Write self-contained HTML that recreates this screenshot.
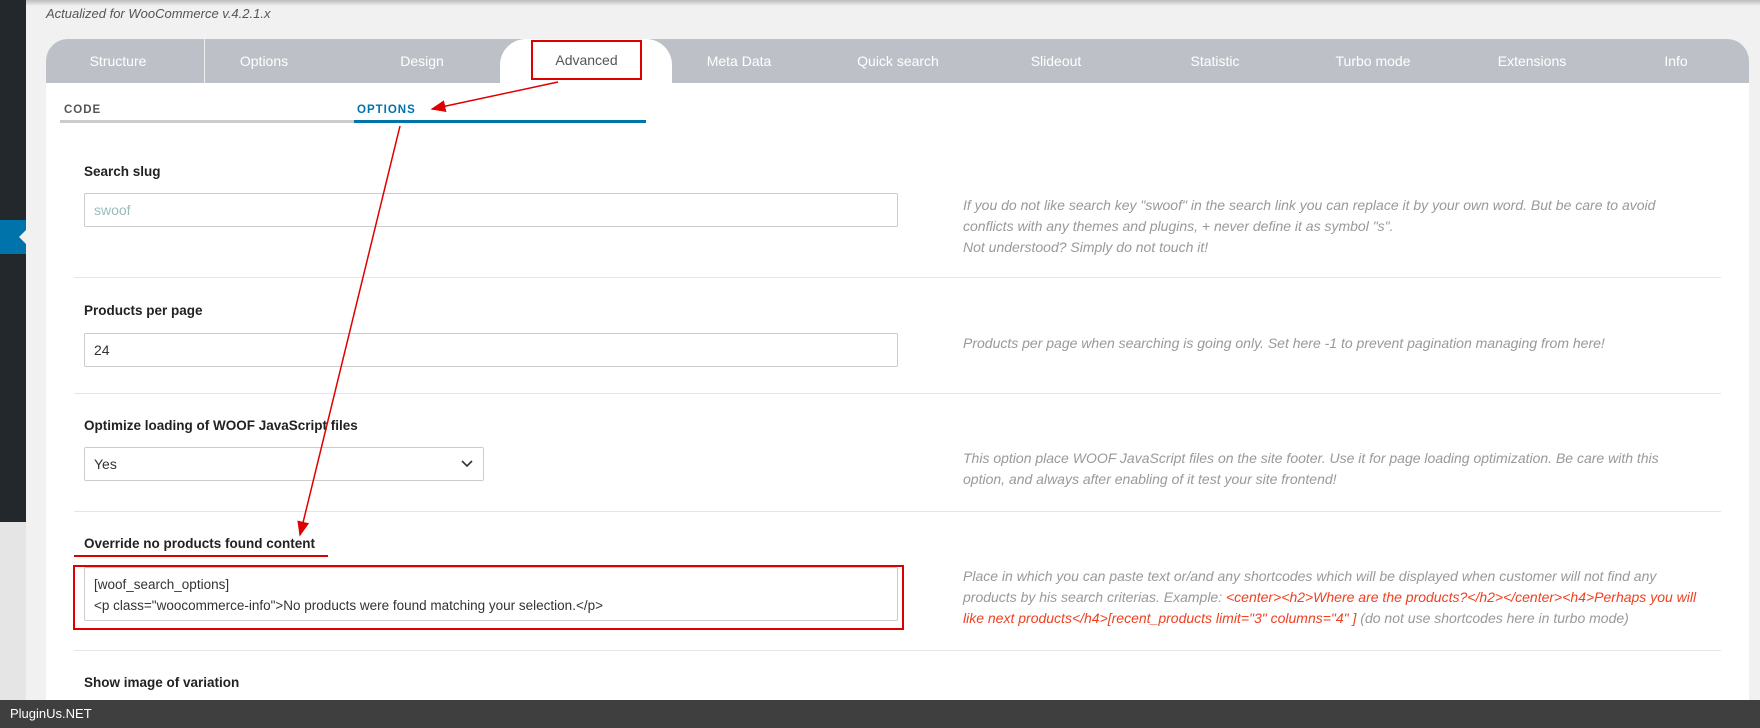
<!DOCTYPE html>
<html><head><meta charset="utf-8"><style>
*{box-sizing:border-box;margin:0;padding:0}
body{width:1760px;height:728px;overflow:hidden;background:#f1f1f1;font-family:"Liberation Sans",Arial,sans-serif;position:relative}
.side{position:absolute;left:0;top:0;width:26px;height:522px;background:#23282d}
.side2{position:absolute;left:0;top:0;width:26px;height:700px;background:#e5e5e5}
.mark{position:absolute;left:0;top:220px;width:26px;height:34px;background:#0073aa}
.mark:after{content:"";position:absolute;right:0;top:10px;border:7px solid transparent;border-right-color:#f1f1f1}
.topsh{position:absolute;left:26px;top:0;right:0;height:6px;background:linear-gradient(#bbb,#f1f1f1)}
.act{position:absolute;left:46px;top:6px;font-size:13px;font-style:italic;color:#555}
.panel{position:absolute;left:46px;top:83px;width:1703px;height:617px;background:#fff}
.tabs{position:absolute;left:46px;top:39px;width:1703px;height:44px;background:#bdc1c7;border-radius:22px 22px 0 0}
.tab{position:absolute;top:0;height:44px;line-height:44px;text-align:center;color:#fff;font-size:14px;width:150px;margin-left:-75px}
.adv{position:absolute;left:500px;top:39px;width:172px;height:45px;background:#fff;border-radius:26px 26px 0 0}
.advbox{position:absolute;left:531px;top:40px;width:111px;height:40px;border:2px solid #d00;color:#555;font-size:14px;text-align:center;line-height:36px}
.sub{position:absolute;top:104px;font-size:11.5px;font-weight:bold;letter-spacing:1px}
.lbl{position:absolute;left:84px;font-size:13.5px;font-weight:bold;color:#222}
.inp{position:absolute;left:84px;width:814px;height:34px;border:1px solid #ccc;border-radius:2px;font-size:14px;padding:8px 9px;color:#333}
.help{position:absolute;left:963px;width:736px;font-size:14px;font-style:italic;color:#999;line-height:21px}
.sep{position:absolute;left:74px;width:1647px;height:1px;background:#e2e6e6}
.red{color:#f04020}
.foot{position:absolute;left:0;top:700px;width:1760px;height:28px;background:#3f3f3f;color:#fff;font-size:13px;line-height:28px;padding-left:10px}
</style></head><body>
<div class="side2"></div><div class="side"></div><div class="mark"></div>
<div class="topsh"></div>
<div class="act">Actualized for WooCommerce v.4.2.1.x</div>
<div class="tabs">
<div class="tab" style="left:72px">Structure</div>
<div style="position:absolute;left:158px;top:0;width:1px;height:44px;background:#eee"></div>
<div class="tab" style="left:218px">Options</div>
<div class="tab" style="left:376px">Design</div>
<div class="tab" style="left:693px">Meta Data</div>
<div class="tab" style="left:852px">Quick search</div>
<div class="tab" style="left:1010px">Slideout</div>
<div class="tab" style="left:1169px">Statistic</div>
<div class="tab" style="left:1327px">Turbo mode</div>
<div class="tab" style="left:1486px">Extensions</div>
<div class="tab" style="left:1630px">Info</div>
</div>
<div class="panel"></div>
<div class="adv"></div>
<div class="advbox">Advanced</div>
<div class="sub" style="left:64px;color:#555">CODE</div>
<div class="sub" style="left:357px;color:#0073aa">OPTIONS</div>
<div style="position:absolute;left:60px;top:120px;width:294px;height:3px;background:#ccc"></div>
<div style="position:absolute;left:354px;top:120px;width:292px;height:3px;background:#0073aa"></div>

<div class="lbl" style="top:164px">Search slug</div>
<div class="inp" style="top:193px;color:#9bb">swoof</div>
<div class="help" style="top:195px">If you do not like search key "swoof" in the search link you can replace it by your own word. But be care to avoid conflicts with any themes and plugins, + never define it as symbol "s".<br>Not understood? Simply do not touch it!</div>
<div class="sep" style="top:277px"></div>

<div class="lbl" style="top:303px">Products per page</div>
<div class="inp" style="top:333px">24</div>
<div class="help" style="top:333px">Products per page when searching is going only. Set here -1 to prevent pagination managing from here!</div>
<div class="sep" style="top:393px"></div>

<div class="lbl" style="top:418px">Optimize loading of WOOF JavaScript files</div>
<div class="inp" style="top:447px;width:400px">Yes<svg style="position:absolute;right:10px;top:12px" width="12" height="8"><path d="M1 1l5 5 5-5" stroke="#333" stroke-width="1.6" fill="none"/></svg></div>
<div class="help" style="top:448px">This option place WOOF JavaScript files on the site footer. Use it for page loading optimization. Be care with this option, and always after enabling of it test your site frontend!</div>
<div class="sep" style="top:511px"></div>

<div class="lbl" style="top:536px">Override no products found content</div>
<div style="position:absolute;left:74px;top:555px;width:254px;height:2px;background:#d00"></div>
<div style="position:absolute;left:73px;top:565px;width:831px;height:65px;border:2px solid #d00"></div>
<div class="inp" style="top:567px;height:54px;padding:6px 9px;font-size:13.5px;line-height:21px">[woof_search_options]<br>&lt;p class="woocommerce-info"&gt;No products were found matching your selection.&lt;/p&gt;</div>
<div class="help" style="top:566px">Place in which you can paste text or/and any shortcodes which will be displayed when customer will not find any products by his search criterias. Example: <span class="red">&lt;center&gt;&lt;h2&gt;Where are the products?&lt;/h2&gt;&lt;/center&gt;&lt;h4&gt;Perhaps you will like next products&lt;/h4&gt;[recent_products limit="3" columns="4" ]</span> (do not use shortcodes here in turbo mode)</div>
<div class="sep" style="top:650px"></div>
<div class="lbl" style="top:675px">Show image of variation</div>

<svg style="position:absolute;left:0;top:0" width="1760" height="728">
<defs><marker id="a" markerWidth="10" markerHeight="8" refX="9" refY="4" orient="auto"><path d="M0 0L10 4 0 8z" fill="#d00"/></marker></defs>
<line x1="558" y1="82" x2="432" y2="109" stroke="#d00" stroke-width="1.5" marker-end="url(#a)"/>
<line x1="400" y1="126" x2="300" y2="535" stroke="#d00" stroke-width="1.5" marker-end="url(#a)"/>
</svg>
<div class="foot">PluginUs.NET</div>
</body></html>
